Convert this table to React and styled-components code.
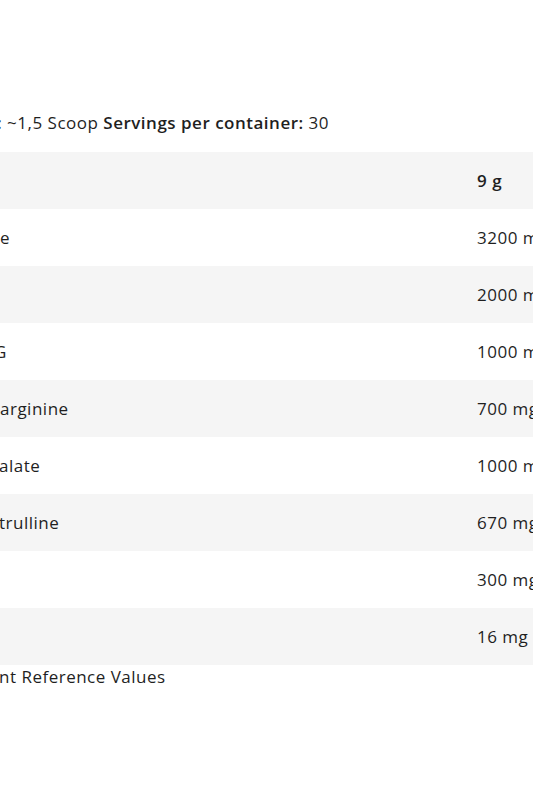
import React from 'react';
import styled, { createGlobalStyle } from 'styled-components';

const Global = createGlobalStyle`
  html, body { margin: 0; padding: 0; background: #fff; }
  body { overflow: hidden; }
`;

const Page = styled.div`
  width: 533px;
  height: 800px;
  overflow: hidden;
  font-family: "Open Sans", "Noto Sans", sans-serif;
  color: #1f1f1f;
  font-size: 17px;
  letter-spacing: 0.5px;
`;

const Sheet = styled.div`
  width: 640px;
  padding-top: 112px;
`;

const Info = styled.p`
  margin: 0 0 18px;
  height: 22px;
  line-height: 22px;
  white-space: nowrap;
  text-indent: -3px;
  b { font-weight: 600; }
`;

const Table = styled.div`
  display: flex;
  flex-direction: column;
`;

const Row = styled.div`
  display: grid;
  grid-template-columns: 477px 1fr;
  align-items: center;
  height: 57px;
  background: ${p => (p.$shade ? '#f5f5f5' : '#fff')};
  font-weight: ${p => (p.$head ? 600 : 400)};
  white-space: nowrap;
`;

const Label = styled.span`
  margin-left: ${p => p.$cut || 0}px;
`;

const Value = styled.span``;

const Footnote = styled.p`
  margin: 1px 0 0;
  line-height: 22px;
  white-space: nowrap;
  margin-left: -1px;
`;

const rows = [
  { label: '', value: '9 g', head: true },
  { label: 'e', value: '3200 mg' },
  { label: '', value: '2000 mg' },
  { label: 'G', value: '1000 mg', cut: -6 },
  { label: 'arginine', value: '700 mg' },
  { label: 'alate', value: '1000 mg', cut: -1 },
  { label: 'trulline', value: '670 mg', cut: -1 },
  { label: '', value: '300 mg' },
  { label: '', value: '16 mg' },
];

export default function App() {
  return (
    <Page>
      <Global />
      <Sheet>
        <Info>
          <b>:</b> ~1,5 Scoop <b>Servings per container:</b> 30
        </Info>
        <Table>
          {rows.map((r, i) => (
            <Row key={i} $shade={i % 2 === 0} $head={r.head}>
              <Label $cut={r.cut}>{r.label}</Label>
              <Value>{r.value}</Value>
            </Row>
          ))}
        </Table>
        <Footnote>nt Reference Values</Footnote>
      </Sheet>
    </Page>
  );
}
